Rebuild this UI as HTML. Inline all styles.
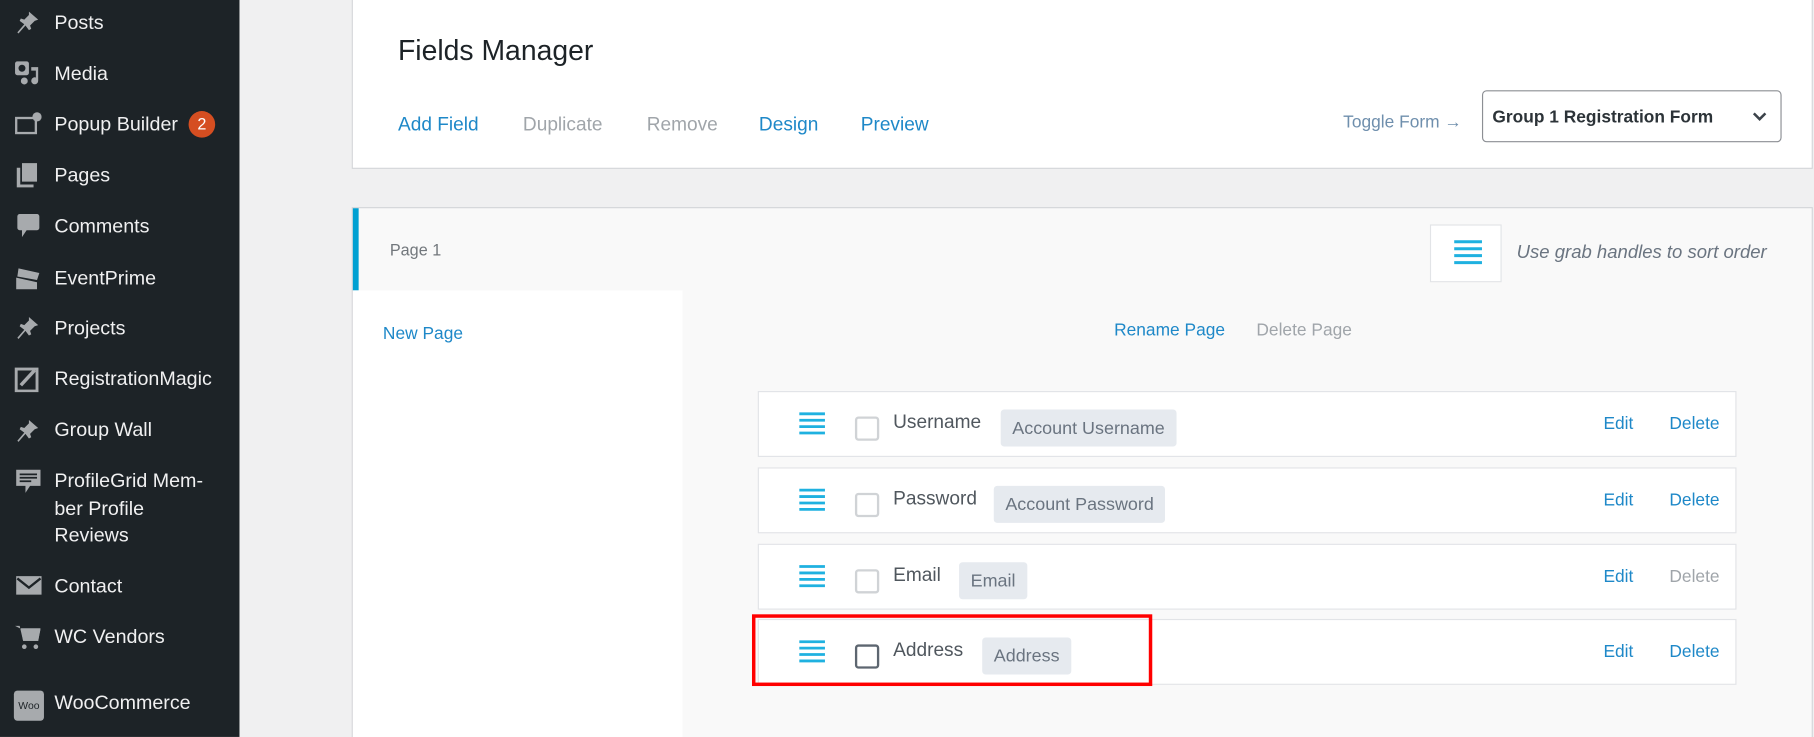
<!DOCTYPE html>
<html><head><meta charset="utf-8"><style>
*{box-sizing:border-box;margin:0;padding:0}
html,body{width:1814px;height:737px;overflow:hidden;background:#f0f0f1;font-family:"Liberation Sans",sans-serif}
#w{position:absolute;left:0;top:0;width:1568px;height:637px;overflow:hidden;transform:scale(1.15689);transform-origin:0 0}
.a{position:absolute;white-space:nowrap}
#sb{position:absolute;left:0;top:0;width:207px;height:637px;background:#1d2327}
.mi{position:absolute;left:47px;color:#f0f0f1;font-size:17px;line-height:24px}
.ic{position:absolute;left:12px;width:24px;height:22px}
.blue{color:#1e88c8}.gray{color:#a0a5aa}
.row{position:absolute;left:655px;width:846px;height:57px;background:#fff;border:1px solid #e2e4e7}
.dr{position:absolute;left:34px;top:16px;width:24px;height:22px}
.cb{position:absolute;left:83px;top:21px;width:21px;height:21px;border:2px solid #d0d3d6;border-radius:3px;background:#fff}
.lb{position:absolute;left:116px;top:17px;font-size:16.5px;color:#50575e}
.bd{position:absolute;top:15px;height:32px;padding:0 10px;line-height:34px;font-size:15.5px;color:#6a7480;background:#e6eaef;border-radius:3px}
.ed{position:absolute;left:730px;top:19px;font-size:15px;color:#1e88c8}
.de{position:absolute;left:787px;top:19px;font-size:15px}
</style></head><body><div id="w">
<div id="sb">
<svg class="ic" style="top:8px" viewBox="0 0 24 22"><path d="M13 2l8 7-3 1-4 4 1 3-2 1-3-4-6 7-1-1 6-7-4-3 1-2 3 1 4-4z" fill="#a7aaad"/></svg><div class="mi" style="top:8px">Posts</div>
<svg class="ic" style="top:52px" viewBox="0 0 24 22"><rect x="1" y="1" width="12" height="12" rx="2" fill="#a7aaad"/><circle cx="7" cy="7" r="3" fill="#1d2327"/><path d="M15 6h6v12a3 3 0 1 1-2-3V9h-4zM9 15a3 3 0 1 1 0 6 3 3 0 0 1 0-6z" fill="#a7aaad"/></svg><div class="mi" style="top:52px">Media</div>
<svg class="ic" style="top:96px" viewBox="0 0 24 22"><rect x="2" y="6" width="17" height="13" fill="none" stroke="#a7aaad" stroke-width="2"/><circle cx="20" cy="5" r="4" fill="#a7aaad"/></svg><div class="mi" style="top:96px">Popup Builder</div>
<div class="a" style="left:163px;top:96px;width:23px;height:23px;border-radius:50%;background:#d54e21;color:#fff;font-size:14px;text-align:center;line-height:23px">2</div>
<svg class="ic" style="top:140px" viewBox="0 0 24 22"><rect x="7" y="1" width="13" height="16" fill="#a7aaad"/><path d="M4 5v16h13" stroke="#a7aaad" stroke-width="3" fill="none"/></svg><div class="mi" style="top:140px">Pages</div>
<svg class="ic" style="top:184px" viewBox="0 0 24 22"><path d="M5 1h15a2 2 0 0 1 2 2v10a2 2 0 0 1-2 2h-9l-4 6v-6H5a2 2 0 0 1-2-2V3a2 2 0 0 1 2-2z" fill="#a7aaad"/></svg><div class="mi" style="top:184px">Comments</div>
<svg class="ic" style="top:229px" viewBox="0 0 24 22"><path d="M4 3l18 4-2 6-17-3zM2 11l18 4v6H2z" fill="#a7aaad"/></svg><div class="mi" style="top:229px">EventPrime</div>
<svg class="ic" style="top:272px" viewBox="0 0 24 22"><path d="M13 2l8 7-3 1-4 4 1 3-2 1-3-4-6 7-1-1 6-7-4-3 1-2 3 1 4-4z" fill="#a7aaad"/></svg><div class="mi" style="top:272px">Projects</div>
<svg class="ic" style="top:317px" viewBox="0 0 24 22"><rect x="2" y="2" width="18" height="19" fill="none" stroke="#a7aaad" stroke-width="2.5"/><path d="M6 16l12-13" stroke="#a7aaad" stroke-width="3"/></svg><div class="mi" style="top:316px">RegistrationMagic</div>
<svg class="ic" style="top:361px" viewBox="0 0 24 22"><path d="M13 2l8 7-3 1-4 4 1 3-2 1-3-4-6 7-1-1 6-7-4-3 1-2 3 1 4-4z" fill="#a7aaad"/></svg><div class="mi" style="top:360px">Group Wall</div>
<svg class="ic" style="top:405px" viewBox="0 0 24 22"><path d="M2 1h21v14H14l-4 6v-6H2z" fill="#a7aaad"/><path d="M5 5h15M5 8h15M5 11h10" stroke="#1d2327" stroke-width="1.5"/></svg><div class="mi" style="top:404px;line-height:23.5px">ProfileGrid Mem-<br>ber Profile<br>Reviews</div>
<svg class="ic" style="top:496px" viewBox="0 0 24 22"><rect x="2" y="2" width="22" height="16" fill="#a7aaad"/><path d="M3 4l10 8 10-8" stroke="#1d2327" stroke-width="2" fill="none"/></svg><div class="mi" style="top:495px">Contact</div>
<svg class="ic" style="top:540px" viewBox="0 0 24 22"><path d="M1 1h4l3 13h13l2-10H7" fill="#a7aaad"/><path d="M6 3h17l-2 11H8z" fill="#a7aaad"/><circle cx="9" cy="19" r="2" fill="#a7aaad"/><circle cx="19" cy="19" r="2" fill="#a7aaad"/></svg><div class="mi" style="top:539px">WC Vendors</div>
<div class="a" style="left:12px;top:597px;width:26px;height:26px;background:#a7aaad;border-radius:3px;font-size:9px;color:#1d2327;text-align:center;line-height:26px">Woo</div><div class="mi" style="top:596px">WooCommerce</div>
</div>

<div class="a" style="left:304px;top:-1px;width:1263px;height:147px;background:#fff;border:1px solid #d3d5d8"></div>
<div class="a" style="left:344px;top:31px;font-size:24.5px;color:#1d2327">Fields Manager</div>
<div class="a blue" style="left:344px;top:99px;font-size:16.5px">Add Field</div>
<div class="a gray" style="left:452px;top:99px;font-size:16.5px">Duplicate</div>
<div class="a gray" style="left:559px;top:99px;font-size:16.5px">Remove</div>
<div class="a blue" style="left:656px;top:99px;font-size:16.5px">Design</div>
<div class="a blue" style="left:744px;top:99px;font-size:16.5px">Preview</div>
<div class="a" style="left:1161px;top:97px;font-size:15px;color:#6f8fad">Toggle Form →</div>
<div class="a" style="left:1281px;top:78px;width:259px;height:45px;border:1px solid #8c8f94;border-radius:4px;background:#fff"></div>
<div class="a" style="left:1290px;top:93px;font-size:15px;font-weight:bold;color:#2c3338">Group 1 Registration Form</div>
<svg class="a" style="left:1514px;top:96px" width="14" height="10" viewBox="0 0 14 10"><path d="M2 2l5 5 5-5" stroke="#3c434a" stroke-width="2.2" fill="none"/></svg>

<div class="a" style="left:304px;top:179px;width:1263px;height:470px;background:#f9f9f9;border:1px solid #d3d5d8"></div>
<div class="a" style="left:305px;top:180px;width:5px;height:71px;background:#00a0d2"></div>
<div class="a" style="left:337px;top:208px;font-size:14px;color:#72777c">Page 1</div>
<div class="a" style="left:305px;top:251px;width:285px;height:400px;background:#fff"></div>
<div class="a blue" style="left:331px;top:280px;font-size:15px">New Page</div>
<div class="a" style="left:1236px;top:194px;width:62px;height:50px;background:#fff;border:1px solid #e2e4e7"></div>
<svg class="a" style="left:1256px;top:207px" width="26" height="22" viewBox="0 0 26 22"><path d="M1 2h24M1 8h24M1 14h24M1 20h24" stroke="#1fb1e0" stroke-width="2.6"/></svg>
<div class="a" style="left:1311px;top:210px;font-size:16px;font-style:italic;color:#6a7480">Use grab handles to sort order</div>
<div class="a blue" style="left:963px;top:277px;font-size:15px">Rename Page</div>
<div class="a gray" style="left:1086px;top:277px;font-size:15px">Delete Page</div>

<div class="row" style="top:338px"><svg class="dr" viewBox="0 0 26 22"><path d="M1 2h24M1 8h24M1 14h24M1 20h24" stroke="#1fb1e0" stroke-width="2.6"/></svg><div class="cb"></div><div class="lb">Username</div><div class="bd" style="left:209px">Account Username</div><div class="ed">Edit</div><div class="de blue">Delete</div></div>
<div class="row" style="top:404px"><svg class="dr" viewBox="0 0 26 22"><path d="M1 2h24M1 8h24M1 14h24M1 20h24" stroke="#1fb1e0" stroke-width="2.6"/></svg><div class="cb"></div><div class="lb">Password</div><div class="bd" style="left:203px">Account Password</div><div class="ed">Edit</div><div class="de blue">Delete</div></div>
<div class="row" style="top:470px"><svg class="dr" viewBox="0 0 26 22"><path d="M1 2h24M1 8h24M1 14h24M1 20h24" stroke="#1fb1e0" stroke-width="2.6"/></svg><div class="cb"></div><div class="lb">Email</div><div class="bd" style="left:173px">Email</div><div class="ed">Edit</div><div class="de gray">Delete</div></div>
<div class="row" style="top:535px"><svg class="dr" viewBox="0 0 26 22"><path d="M1 2h24M1 8h24M1 14h24M1 20h24" stroke="#1fb1e0" stroke-width="2.6"/></svg><div class="cb" style="border-color:#5d6670"></div><div class="lb">Address</div><div class="bd" style="left:193px">Address</div><div class="ed">Edit</div><div class="de blue">Delete</div></div>
<div class="a" style="left:650px;top:531px;width:346px;height:62px;border:3px solid #f00"></div>
</div></body></html>
